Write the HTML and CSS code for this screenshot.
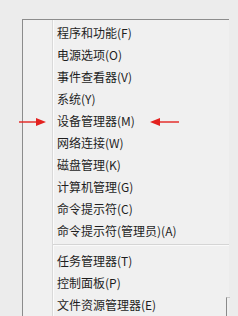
FILE: index.html
```html
<!DOCTYPE html>
<html lang="zh-CN">
<head>
<meta charset="utf-8">
<link rel="stylesheet" href="styles.css">
</head>
<body>
<div class="screen">
  <div class="menu">
    <ul class="group">
      <li>程序和功能(F)</li>
      <li>电源选项(O)</li>
      <li>事件查看器(V)</li>
      <li>系统(Y)</li>
      <li>设备管理器(M)</li>
      <li>网络连接(W)</li>
      <li>磁盘管理(K)</li>
      <li>计算机管理(G)</li>
      <li>命令提示符(C)</li>
      <li>命令提示符(管理员)(A)</li>
    </ul>
    <div class="sep"></div>
    <ul class="group">
      <li>任务管理器(T)</li>
      <li>控制面板(P)</li>
      <li>文件资源管理器(E)</li>
    </ul>
  </div>
  <svg class="arrow arrow-left" width="30" height="10" viewBox="0 0 30 10">
    <line x1="0" y1="5" x2="20" y2="5" stroke="#e3211f" stroke-width="1.4"/>
    <polygon points="17,1 27,5 17,9" fill="#e3211f"/>
  </svg>
  <svg class="arrow arrow-right" width="32" height="10" viewBox="0 0 32 10">
    <line x1="8" y1="5" x2="30" y2="5" stroke="#e3211f" stroke-width="1.4"/>
    <polygon points="11,1 1,5 11,9" fill="#e3211f"/>
  </svg>
  <span class="edge"></span>
</div>
</body>
</html>
```
FILE: styles.css
```css
html, body {
  margin: 0;
  padding: 0;
}
body {
  width: 238px;
  height: 316px;
  overflow: hidden;
  background: #ececec;
  font-family: "Noto Sans CJK SC", "Noto Sans", sans-serif;
}
.screen {
  position: relative;
  width: 238px;
  height: 316px;
  padding: 19px 0 0 22px;
  box-sizing: border-box;
}
.menu {
  width: 207px;
  height: 297px;
  box-sizing: border-box;
  background: #f0f0f0 linear-gradient(to right, transparent 29px, #d9d9d9 29px, #d9d9d9 30px, #fbfbfb 30px, #fbfbfb 31px, transparent 31px);
  border-top: 1px solid #8c8c8c;
  border-left: 1px solid #8c8c8c;
  padding-top: 2px;
}
.group {
  list-style: none;
  margin: 0;
  padding: 0;
}
.group li {
  height: 22px;
  line-height: 22px;
  padding-left: 34px;
  font-size: 12px;
  color: #1e1e1e;
  white-space: nowrap;
}
.sep {
  margin: 2px 0 4px 30px;
  height: 1px;
  background: #d5d5d5;
  border-bottom: 1px solid #fafafa;
}
.arrow {
  position: absolute;
  top: 117px;
}
.arrow-left {
  left: 19px;
}
.arrow-right {
  left: 149px;
}
.edge {
  position: absolute;
  left: 226px;
  top: 297px;
  width: 4px;
  height: 19px;
  border-left: 1px solid #8a8a8a;
  border-top: 1px solid #c8c8c8;
  box-sizing: border-box;
}
```
